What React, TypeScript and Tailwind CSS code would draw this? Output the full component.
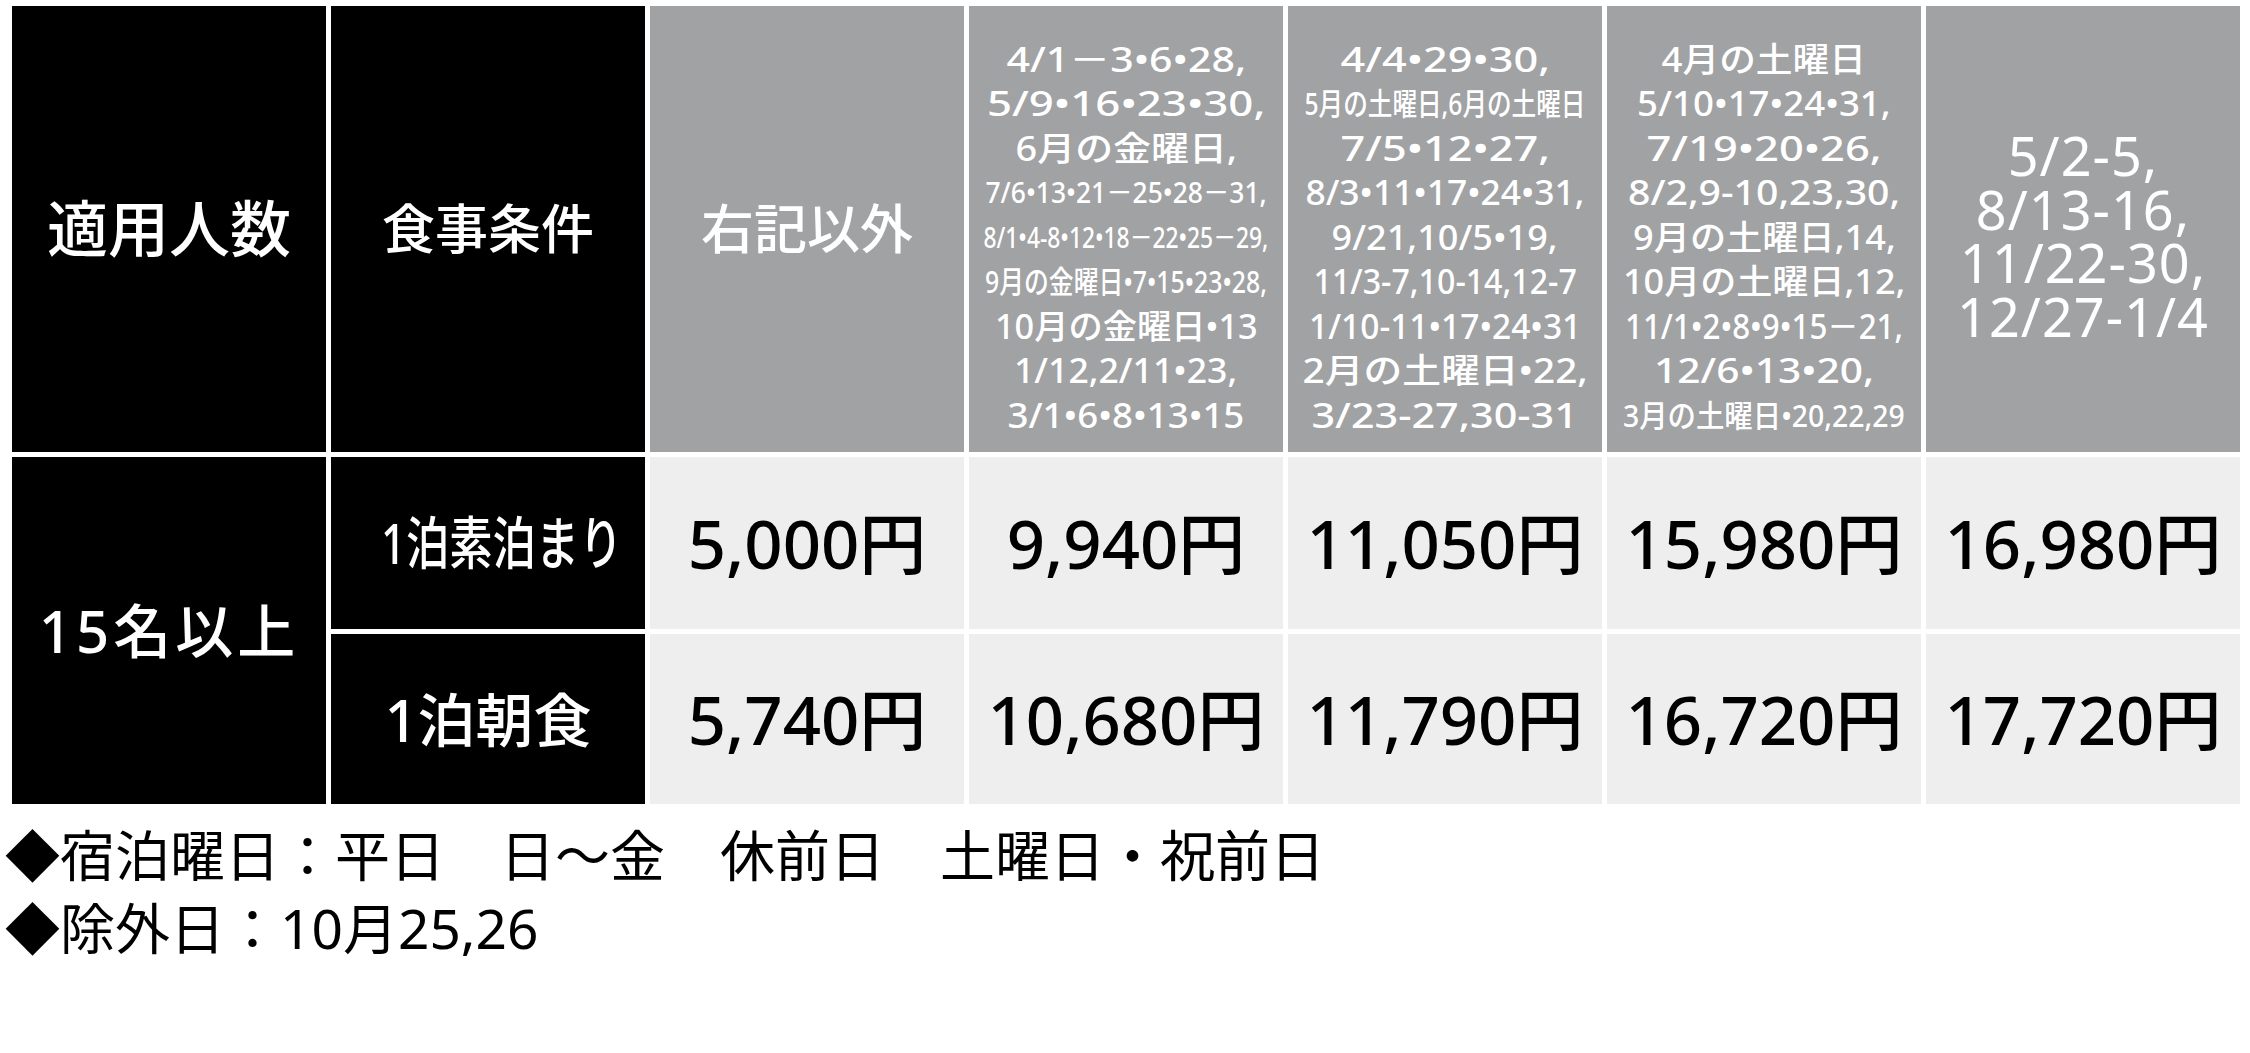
import React, { useLayoutEffect, useRef, useState } from 'react';

// line sizes for the date cells
const N = 'text-[34px] leading-[44.5px]';
const S = 'text-[28px] leading-[44.5px]';
const M = 'text-[31px] leading-[44.5px]';

type Line = [string, number, string];

const weekdayDates: Line[] = [
  ['4/1－3•6•28,', 240, N],
  ['5/9•16•23•30,', 278, N],
  ['6月の金曜日,', 222, N],
  ['7/6•13•21－25•28－31,', 281, S],
  ['8/1•4-8•12•18－22•25－29,', 285, S],
  ['9月の金曜日•7•15•23•28,', 282, M],
  ['10月の金曜日•13', 263, N],
  ['1/12,2/11•23,', 223, N],
  ['3/1•6•8•13•15', 237, N],
];

const holidayEveDates: Line[] = [
  ['4/4•29•30,', 210, N],
  ['5月の土曜日,6月の土曜日', 281, M],
  ['7/5•12•27,', 210, N],
  ['8/3•11•17•24•31,', 279, N],
  ['9/21,10/5•19,', 226, N],
  ['11/3-7,10-14,12-7', 263, N],
  ['1/10-11•17•24•31', 272, N],
  ['2月の土曜日•22,', 285, N],
  ['3/23-27,30-31', 266, N],
];

const saturdayDates: Line[] = [
  ['4月の土曜日', 204, N],
  ['5/10•17•24•31,', 254, N],
  ['7/19•20•26,', 235, N],
  ['8/2,9-10,23,30,', 272, N],
  ['9月の土曜日,14,', 263, N],
  ['10月の土曜日,12,', 282, N],
  ['11/1•2•8•9•15－21,', 278, N],
  ['12/6•13•20,', 220, N],
  ['3月の土曜日•20,22,29', 282, M],
];

const peakDates = ['5/2-5,', '8/13-16,', '11/22-30,', '12/27-1/4'];

const roomOnly = ['5,000円', '9,940円', '11,050円', '15,980円', '16,980円'];
const withBreakfast = ['5,740円', '10,680円', '11,790円', '16,720円', '17,720円'];

// squeezes a line horizontally to the width it has in the printed table
const FitLine: React.FC<{ text: string; width: number; size: string }> = ({ text, width, size }) => {
  const ref = useRef<HTMLSpanElement>(null);
  const [scale, setScale] = useState(1);

  useLayoutEffect(() => {
    const measure = () => {
      if (ref.current && ref.current.offsetWidth > 0) setScale(width / ref.current.offsetWidth);
    };
    measure();
    document.fonts?.ready.then(measure);
  }, [text, width]);

  return (
    <div className="flex justify-center whitespace-nowrap">
      <span ref={ref} className={`inline-block ${size}`} style={{ transform: `scaleX(${scale})` }}>
        {text}
      </span>
    </div>
  );
};

const DateCell: React.FC<{ lines: Line[] }> = ({ lines }) => (
  <div className="bg-[#a1a2a4] text-white font-medium flex flex-col justify-center pt-[16px] overflow-hidden">
    {lines.map(([text, width, size]) => (
      <FitLine key={text} text={text} width={width} size={size} />
    ))}
  </div>
);

const PriceCell: React.FC<{ value: string }> = ({ value }) => (
  <div className="bg-[#eeeeee] flex items-center justify-center text-[67px] font-medium leading-none text-black">
    {value}
  </div>
);

export default function App() {
  return (
    <div className="w-[2250px] h-[1053px] bg-white pt-[6px] pl-[12px] font-['Noto_Sans','Noto_Sans_CJK_JP',sans-serif]">
      <div className="grid grid-cols-[repeat(7,314px)] grid-rows-[446px_172px_170px] gap-[5px]">
        <div className="bg-black text-white flex items-center justify-center text-[61px] font-medium">
          適用人数
        </div>
        <div className="bg-black text-white flex items-center justify-center text-[53px] font-medium">
          食事条件
        </div>
        <div className="bg-[#a1a2a4] text-white flex items-center justify-center text-[53px] font-medium">
          右記以外
        </div>
        <DateCell lines={weekdayDates} />
        <DateCell lines={holidayEveDates} />
        <DateCell lines={saturdayDates} />
        <div className="bg-[#a1a2a4] text-white flex flex-col items-center justify-center pt-[14px] text-[54px] leading-[53.5px] tracking-[1px]">
          {peakDates.map((d) => (
            <div key={d}>{d}</div>
          ))}
        </div>

        <div className="row-span-2 bg-black text-white flex items-center justify-center text-[58px] font-medium tracking-[4px]">
          15名以上
        </div>
        <div className="bg-black text-white flex items-center justify-center text-[57px] font-medium overflow-hidden">
          <span className="inline-block translate-x-[14px] scale-x-[0.76] whitespace-nowrap">1泊素泊まり</span>
        </div>
        {roomOnly.map((p) => (
          <PriceCell key={p} value={p} />
        ))}
        <div className="bg-black text-white flex items-center justify-center text-[58px] font-medium">
          1泊朝食
        </div>
        {withBreakfast.map((p) => (
          <PriceCell key={p} value={p} />
        ))}
      </div>

      <div className="-ml-[7px] mt-[14px] text-[55px] leading-[73px] text-black whitespace-nowrap">
        <p>◆宿泊曜日：平日　日～金　休前日　土曜日・祝前日</p>
        <p>◆除外日：10月25,26</p>
      </div>
    </div>
  );
}
